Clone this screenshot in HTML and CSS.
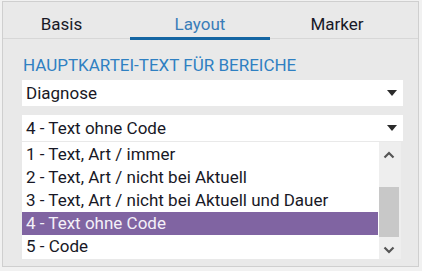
FILE: index.html
```html
<!DOCTYPE html>
<html lang="de">
<head>
  <meta charset="UTF-8" />
  <title>Layout</title>
  <link rel="stylesheet" href="styles.css">
</head>
<body>
  <div class="panel">
    <div class="tabs">
      <div class="tab">Basis</div>
      <div class="tab active">Layout</div>
      <div class="tab">Marker</div>
    </div>

    <div class="content">
      <h2 class="section-title">HAUPTKARTEI-TEXT FÜR BEREICHE</h2>

      <div class="select">
        <span>Diagnose</span>
        <span class="caret"></span>
      </div>

      <div class="select second">
        <span>4 - Text ohne Code</span>
        <span class="caret"></span>
      </div>

      <div class="listbox">
        <ul class="options">
          <li>1 - Text, Art / immer</li>
          <li>2 - Text, Art / nicht bei Aktuell</li>
          <li>3 - Text, Art / nicht bei Aktuell und Dauer</li>
          <li class="selected">4 - Text ohne Code</li>
          <li>5 - Code</li>
        </ul>
        <div class="scrollbar">
          <svg class="arrow" width="12" height="8" viewBox="0 0 12 8"><path d="M1.5 6.5 L6 2 L10.5 6.5" fill="none" stroke="#555" stroke-width="2.2"/></svg>
          <div class="thumb"></div>
          <svg class="arrow" width="12" height="8" viewBox="0 0 12 8"><path d="M1.5 1.5 L6 6 L10.5 1.5" fill="none" stroke="#555" stroke-width="2.2"/></svg>
        </div>
      </div>
    </div>
  </div>
</body>
</html>
```

FILE: styles.css
```css
* {
  margin: 0;
  padding: 0;
  box-sizing: border-box;
}

body {
  font-family: Roboto, 'Liberation Sans', sans-serif;
  font-size: 17px;
  line-height: 20px;
  color: #181826;
  background: #f1f1f1;
  width: 422px;
  height: 271px;
  overflow: hidden;
}

.panel {
  margin: 1px 0 0 2px;
  width: 417px;
  height: 266px;
  background: #e9e9e9;
  border: 1px solid #cfcfcf;
}

.tabs {
  display: grid;
  grid-template-columns: 127px 140px 134px;
  height: 37px;
  border-bottom: 1px solid #d7d7d7;
}

.tab {
  position: relative;
  text-align: center;
  padding-top: 12px;
}

.tab:first-child {
  padding-right: 10px;
}

.tab.active {
  color: #3a7db8;
}

.tab.active::after {
  content: "";
  position: absolute;
  left: 0;
  right: 0;
  bottom: -2px;
  height: 3px;
  background: #1566a3;
}

.content {
  padding: 16px 15px 0 19px;
}

.section-title {
  font-size: 17px;
  font-weight: normal;
  color: #2f80c2;
  line-height: 20px;
  padding-left: 1px;
}

.select {
  display: flex;
  justify-content: space-between;
  align-items: center;
  height: 26px;
  margin-top: 5px;
  padding: 0 6px 0 4px;
  background: #fff;
}

.select.second {
  margin-top: 9px;
}

.caret {
  width: 0;
  height: 0;
  border-left: 5px solid transparent;
  border-right: 5px solid transparent;
  border-top: 6px solid #2b2b2b;
}

.listbox {
  display: flex;
  margin-top: 1px;
  width: 379px;
  height: 117px;
  background: #fff;
}

.options {
  list-style: none;
  width: 356px;
  padding-top: 1px;
}

.options li {
  height: 23px;
  line-height: 23px;
  padding-left: 4px;
  white-space: nowrap;
}

.options li.selected {
  background: #8064a2;
  color: #f4f0f8;
}

.scrollbar {
  display: flex;
  flex-direction: column;
  align-items: center;
  margin-left: 1px;
  width: 22px;
  background: #eeeeee;
}

.arrow {
  display: block;
  margin: 9px 2px 0 0;
}

.scrollbar .arrow:last-child {
  margin: 9px 2px 0 0;
}

.thumb {
  align-self: flex-start;
  margin-top: 28px;
  width: 20px;
  height: 50px;
  background: #c8c8c8;
}
```
